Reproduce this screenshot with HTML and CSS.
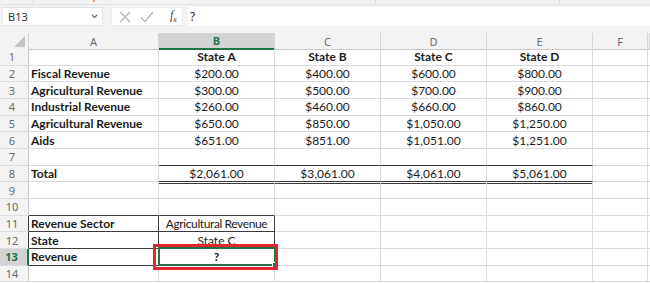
FILE: index.html
```html
<!DOCTYPE html>
<html lang="en">
<head>
  <meta charset="UTF-8">
  <title>Revenue Lookup</title>
  <link rel="stylesheet" href="styles.css">
</head>
<body>

  <!-- ribbon edge -->
  <div class="ribbon-edge">
    <span class="sep s1"></span>
    <span class="tick"></span>
    <span class="sep s2"></span>
    <span class="sep s3"></span>
  </div>

  <!-- formula bar -->
  <div class="formula-bar">
    <div class="name-box">
      <span>B13</span>
      <svg class="chev" width="7" height="5" viewBox="0 0 7 5"><path d="M1 1l2.5 2.5L6 1" fill="none" stroke="#666" stroke-width="1.1"/></svg>
    </div>
    <div class="fx-box">
      <svg width="12" height="12" viewBox="0 0 12 12"><path d="M1 1l10 10M11 1L1 11" stroke="#b4b4b4" stroke-width="1.2"/></svg>
      <svg width="14" height="12" viewBox="0 0 14 12"><path d="M1 6.5l4 4L13 1" fill="none" stroke="#b4b4b4" stroke-width="1.2"/></svg>
      <span class="fx">f<sub>x</sub></span>
    </div>
    <div class="formula-input">?</div>
  </div>

  <!-- sheet -->
  <div class="sheet">
    <div class="row head">
      <div class="corner"><span class="tri"></span></div>
      <div class="ch">A</div>
      <div class="ch sel">B</div>
      <div class="ch">C</div>
      <div class="ch">D</div>
      <div class="ch">E</div>
      <div class="ch">F</div>
      <div class="ch"></div>
    </div>

    <div class="row">
      <div class="rh">1</div>
      <div class="c"></div>
      <div class="c ctr b">State A</div>
      <div class="c ctr b">State B</div>
      <div class="c ctr b">State C</div>
      <div class="c ctr b">State D</div>
      <div class="c"></div><div class="c"></div>
    </div>
    <div class="row">
      <div class="rh">2</div>
      <div class="c b">Fiscal Revenue</div>
      <div class="c ctr">$200.00</div>
      <div class="c ctr">$400.00</div>
      <div class="c ctr">$600.00</div>
      <div class="c ctr">$800.00</div>
      <div class="c"></div><div class="c"></div>
    </div>
    <div class="row">
      <div class="rh">3</div>
      <div class="c b">Agricultural Revenue</div>
      <div class="c ctr">$300.00</div>
      <div class="c ctr">$500.00</div>
      <div class="c ctr">$700.00</div>
      <div class="c ctr">$900.00</div>
      <div class="c"></div><div class="c"></div>
    </div>
    <div class="row">
      <div class="rh">4</div>
      <div class="c b">Industrial Revenue</div>
      <div class="c ctr">$260.00</div>
      <div class="c ctr">$460.00</div>
      <div class="c ctr">$660.00</div>
      <div class="c ctr">$860.00</div>
      <div class="c"></div><div class="c"></div>
    </div>
    <div class="row">
      <div class="rh">5</div>
      <div class="c b">Agricultural Revenue</div>
      <div class="c ctr">$650.00</div>
      <div class="c ctr">$850.00</div>
      <div class="c ctr">$1,050.00</div>
      <div class="c ctr">$1,250.00</div>
      <div class="c"></div><div class="c"></div>
    </div>
    <div class="row">
      <div class="rh">6</div>
      <div class="c b">Aids</div>
      <div class="c ctr">$651.00</div>
      <div class="c ctr">$851.00</div>
      <div class="c ctr">$1,051.00</div>
      <div class="c ctr">$1,251.00</div>
      <div class="c"></div><div class="c"></div>
    </div>
    <div class="row">
      <div class="rh">7</div>
      <div class="c"></div>
      <div class="c line-b"></div>
      <div class="c line-b"></div>
      <div class="c line-b"></div>
      <div class="c line-b"></div>
      <div class="c"></div><div class="c"></div>
    </div>
    <div class="row">
      <div class="rh">8</div>
      <div class="c b">Total</div>
      <div class="c ctr line-b">$2,061.00</div>
      <div class="c ctr line-b">$3,061.00</div>
      <div class="c ctr line-b">$4,061.00</div>
      <div class="c ctr line-b">$5,061.00</div>
      <div class="c"></div><div class="c"></div>
    </div>
    <div class="row">
      <div class="rh">9</div>
      <div class="c"></div>
      <div class="c dbl"></div>
      <div class="c dbl"></div>
      <div class="c dbl"></div>
      <div class="c dbl"></div>
      <div class="c"></div><div class="c"></div>
    </div>
    <div class="row">
      <div class="rh">10</div>
      <div class="c line-b"></div>
      <div class="c line-b"></div>
      <div class="c"></div><div class="c"></div><div class="c"></div>
      <div class="c"></div><div class="c"></div>
    </div>
    <div class="row">
      <div class="rh line-r">11</div>
      <div class="c b box">Revenue Sector</div>
      <div class="c ctr box tight">Agricultural Revenue</div>
      <div class="c"></div><div class="c"></div><div class="c"></div>
      <div class="c"></div><div class="c"></div>
    </div>
    <div class="row">
      <div class="rh line-r">12</div>
      <div class="c b box">State</div>
      <div class="c ctr box">State C</div>
      <div class="c"></div><div class="c"></div><div class="c"></div>
      <div class="c"></div><div class="c"></div>
    </div>
    <div class="row">
      <div class="rh active">13</div>
      <div class="c b box">Revenue</div>
      <div class="c ctr b box selected">?
        <span class="handle"></span>
        <span class="callout"></span>
      </div>
      <div class="c"></div><div class="c"></div><div class="c"></div>
      <div class="c"></div><div class="c"></div>
    </div>
    <div class="row">
      <div class="rh">14</div>
      <div class="c"></div><div class="c"></div><div class="c"></div>
      <div class="c"></div><div class="c"></div><div class="c"></div>
      <div class="c"></div>
    </div>
  </div>

</body>
</html>
```

FILE: styles.css
```css
/* Page */
* {
  box-sizing: border-box;
}
html, body {
  margin: 0;
  padding: 0;
}
body {
  width: 650px;
  height: 284px;
  overflow: hidden;
  background: #ffffff;
  color: #1b1b1b;
  font-family: Lato, "Liberation Sans", sans-serif;
}

/* Ribbon edge */
.ribbon-edge {
  display: flex;
  height: 5px;
  background: #f3f3f3;
  border-bottom: 1px solid #e2e2e2;
}
.ribbon-edge .sep {
  width: 1px;
  height: 3px;
  background: #d6d6d6;
}
.ribbon-edge .s1 { margin-left: 33px; }
.ribbon-edge .tick {
  width: 2px;
  height: 2px;
  margin-left: 59px;
  background: #e3a47a;
}
.ribbon-edge .s2 { margin-left: 280px; }
.ribbon-edge .s3 { margin-left: 183px; }

/* Formula bar */
.formula-bar {
  display: flex;
  height: 28px;
  padding: 2px 0 7px 2px;
  background: #f3f3f3;
  font-family: "Noto Sans", "Open Sans", sans-serif;
  font-size: 11px;
  color: #333;
}
.name-box {
  width: 101px;
  display: flex;
  align-items: center;
  justify-content: space-between;
  padding: 0 4px 0 5px;
  background: #fff;
  border: 1px solid #e4e4e4;
}
.fx-box {
  width: 72px;
  margin-left: 8px;
  display: flex;
  align-items: center;
  padding-left: 7px;
  gap: 9px;
  background: #fff;
  border: 1px solid #ececec;
}
.fx-box .fx {
  margin-left: 7px;
  font-family: "Liberation Serif", serif;
  font-style: italic;
  font-size: 12px;
  color: #444;
}
.fx-box .fx sub {
  font-size: 8px;
}
.formula-input {
  flex: 1;
  margin-left: 5px;
  padding-left: 2px;
  display: flex;
  align-items: center;
  background: #fff;
  font-size: 12px;
}

/* Sheet grid */
.row {
  display: grid;
  grid-template-columns: 29px 130px 116px 106px 106px 106px 55px 1fr;
  height: 16.667px;
}
.row.head {
  height: 16px;
  background: #f3f3f3;
  font-family: "Noto Sans", "Open Sans", sans-serif;
  font-size: 11px;
  color: #6b6b6b;
}
.corner {
  display: flex;
  align-items: flex-end;
  justify-content: flex-end;
  padding: 0 3px 2px 0;
  border-right: 1px solid #d0d0d0;
  border-bottom: 1px solid #c8c8c8;
}
.corner .tri {
  width: 0;
  height: 0;
  border-left: 11px solid transparent;
  border-bottom: 11px solid #c4c4c4;
}
.ch {
  display: flex;
  align-items: center;
  justify-content: center;
  border-right: 1px solid #d6d6d6;
  border-bottom: 1px solid #c8c8c8;
}
.ch.sel {
  background: #d3d3d3;
  color: #217346;
  font-weight: bold;
  border-bottom: 2px solid #217346;
}

/* Row headers */
.rh {
  display: flex;
  align-items: center;
  justify-content: center;
  padding-right: 4px;
  background: #f3f3f3;
  border-right: 1px solid #c8c8c8;
  border-bottom: 1px solid #dcdcdc;
  font-family: "Noto Sans", "Open Sans", sans-serif;
  font-size: 11px;
  color: #6b6b6b;
}
.rh.line-r {
  border-right-color: #3a3a3a;
}
.rh.active {
  background: #d3d3d3;
  color: #217346;
  font-weight: bold;
  border-right: 2px solid #217346;
}

/* Cells */
.c {
  display: flex;
  align-items: center;
  padding: 0 2px;
  white-space: nowrap;
  font-size: 12px;
  border-right: 1px solid #dadada;
  border-bottom: 1px solid #dadada;
}
.c.b {
  font-weight: bold;
}
.c.ctr {
  justify-content: center;
}
.c.tight {
  letter-spacing: -0.4px;
}
.c.line-b {
  border-bottom-color: #3a3a3a;
}
.c.dbl {
  background: linear-gradient(#fff 1px, #3a3a3a 1px, #3a3a3a 2px, transparent 2px);
}
.c.box {
  border-right-color: #3a3a3a;
  border-bottom-color: #3a3a3a;
}

/* Active cell and callout */
.c.selected {
  position: relative;
}
.c.selected::after {
  content: "";
  position: absolute;
  left: -1px;
  top: -2px;
  right: -2px;
  bottom: -1px;
  border: 2px solid #217346;
}
.handle {
  position: absolute;
  right: -4px;
  bottom: -3px;
  width: 6px;
  height: 6px;
  background: #217346;
  border: 1px solid #fff;
  z-index: 2;
}
.callout {
  position: absolute;
  left: -6px;
  top: -5px;
  width: 125px;
  height: 26px;
  border: 3px solid #e0262e;
  z-index: 3;
}
```
